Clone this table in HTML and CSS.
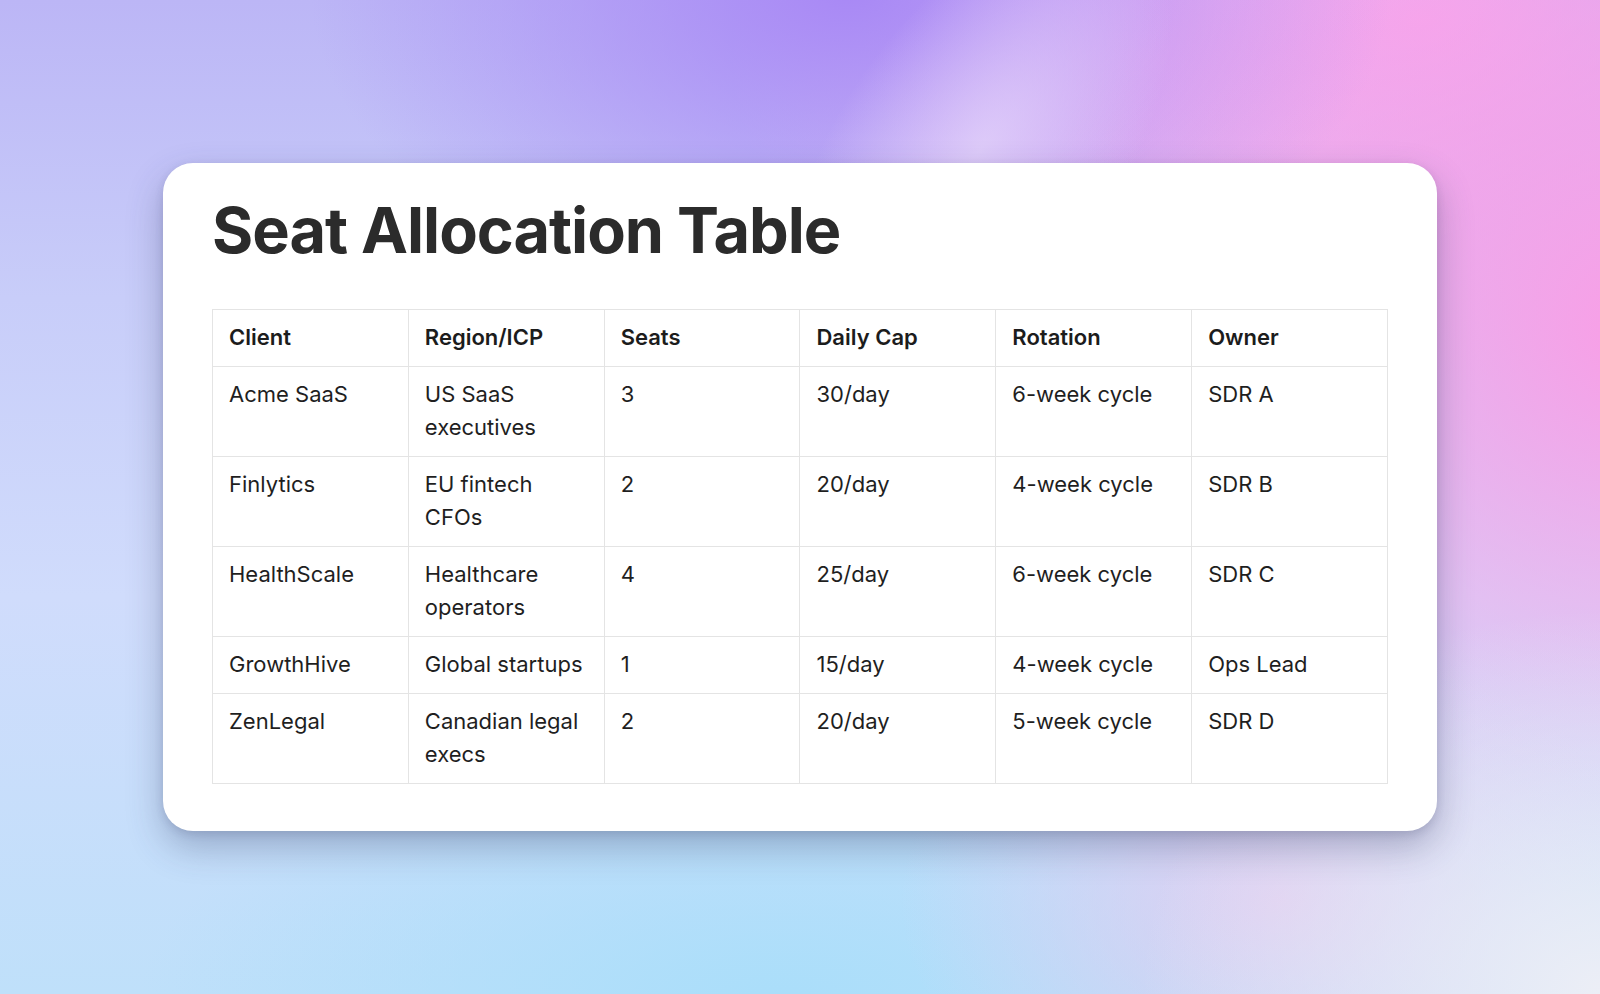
FILE: index.html
```html
<!DOCTYPE html>
<html lang="en">
<head>
<meta charset="utf-8">
<title>Seat Allocation Table</title>
<link rel="stylesheet" href="styles.css">
</head>
<body>
<div class="glow" aria-hidden="true"></div>
<main class="stage">
  <section class="card">
    <h1 class="title">Seat Allocation Table</h1>
    <table class="grid">
      <thead>
        <tr><th>Client</th><th>Region/ICP</th><th>Seats</th><th>Daily Cap</th><th>Rotation</th><th>Owner</th></tr>
      </thead>
      <tbody>
        <tr><td>Acme SaaS</td><td>US SaaS executives</td><td>3</td><td>30/day</td><td>6-week cycle</td><td>SDR A</td></tr>
        <tr><td>Finlytics</td><td>EU fintech CFOs</td><td>2</td><td>20/day</td><td>4-week cycle</td><td>SDR B</td></tr>
        <tr><td>HealthScale</td><td>Healthcare operators</td><td>4</td><td>25/day</td><td>6-week cycle</td><td>SDR C</td></tr>
        <tr><td>GrowthHive</td><td>Global startups</td><td>1</td><td>15/day</td><td>4-week cycle</td><td>Ops Lead</td></tr>
        <tr><td>ZenLegal</td><td>Canadian legal execs</td><td>2</td><td>20/day</td><td>5-week cycle</td><td>SDR D</td></tr>
      </tbody>
    </table>
  </section>
</main>
</body>
</html>
```
FILE: styles.css
```css
* { box-sizing: border-box; }
html, body { margin: 0; padding: 0; }
body {
  position: relative;
  width: 1600px;
  height: 994px;
  overflow: hidden;
  font-family: Inter, "Liberation Sans", sans-serif;
  background:
    radial-gradient(ellipse 540px 330px at 850px -10px, rgba(168,136,245,1), rgba(168,136,245,0) 100%),
    radial-gradient(ellipse 460px 380px at 1600px 990px, rgba(236,238,246,1), rgba(236,238,246,0) 100%),
    radial-gradient(ellipse 380px 260px at 1280px 900px, rgba(226,204,240,0.9), rgba(226,204,240,0) 100%),
    radial-gradient(ellipse 620px 560px at 1640px 330px, rgba(249,158,230,1), rgba(249,158,230,0) 100%),
    radial-gradient(ellipse 560px 360px at 1420px 20px, rgba(244,168,238,1), rgba(244,168,238,0) 100%),
    radial-gradient(ellipse 420px 300px at 1150px 60px, rgba(234,196,244,1), rgba(234,196,244,0) 100%),
    radial-gradient(ellipse 640px 260px at 780px 1000px, rgba(170,222,250,1), rgba(170,222,250,0) 100%),
    linear-gradient(180deg, #bcb6f6 0%, #c8cdf9 30%, #d0dcfc 60%, #bfe0fa 100%);
}
.glow {
  position: absolute;
  left: 840px;
  top: -120px;
  width: 280px;
  height: 540px;
  transform: rotate(35deg);
  background: radial-gradient(ellipse 50% 50% at 50% 50%, rgba(228,212,250,0.8), rgba(228,212,250,0) 100%);
  z-index: 0;
}
.stage {
  position: relative;
  z-index: 1;
  padding: 163px 0 0 163px;
}
.card {
  width: 1274px;
  height: 668px;
  background: #ffffff;
  border-radius: 30px;
  padding: 35px 49px 48px 49px;
  box-shadow: 0 16px 36px rgba(50, 60, 100, 0.32), 0 3px 8px rgba(50, 50, 90, 0.14);
}
.title {
  margin: 0 0 47px 0;
  font-family: Inter, "Liberation Sans", sans-serif;
  font-weight: 700;
  font-size: 63px;
  line-height: 64px;
  letter-spacing: -1px;
  color: #2b2b2b;
}
.grid {
  width: 1176px;
  border-collapse: collapse;
  table-layout: fixed;
  color: #1f1f1f;
  font-size: 22px;
  line-height: 33px;
}
.grid th, .grid td {
  border: 1px solid #e4e4e4;
  padding: 11px 16px 12px 16px;
  text-align: left;
  vertical-align: top;
}
.grid th {
  font-weight: 600;
  color: #1c1c1c;
}
.grid td {
  font-weight: 400;
}
```
